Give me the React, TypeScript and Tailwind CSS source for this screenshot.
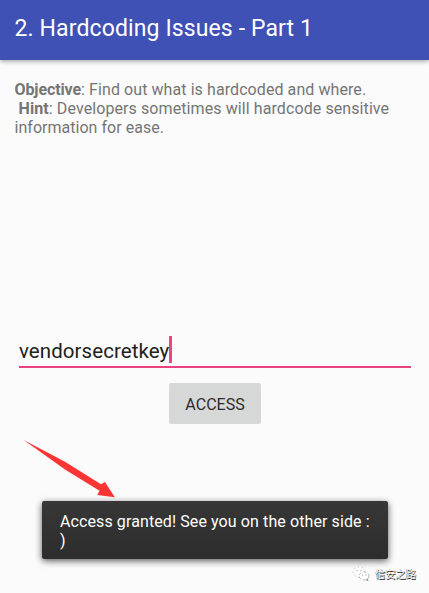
import React from "react";

function AppBar() {
  return (
    <header className="relative z-10 h-[60px] bg-[#3f51b5] pl-[14.5px] pt-[14px] shadow-[0_1px_5px_rgba(0,0,0,0.4)]">
      <h1 className="whitespace-nowrap text-[23px] leading-[30px] tracking-[0.12px] text-white">
        2. Hardcoding Issues - Part 1
      </h1>
    </header>
  );
}

function Instructions() {
  return (
    <div className="h-[275px] pl-[14.5px] pt-[21px] text-[16px] leading-[18.75px] text-[#757575]">
      <p className="whitespace-pre tracking-[0.08px]">
        <b className="tracking-[-0.1px]">Objective</b>: Find out what is hardcoded and where.
      </p>
      <p className="whitespace-pre tracking-[0.09px]">
        {" "}
        <b>Hint</b>: Developers sometimes will hardcode sensitive
      </p>
      <p className="whitespace-pre tracking-[0.03px]">information for ease.</p>
    </div>
  );
}

function KeyField() {
  return (
    <div className="mx-[19px] mr-[18px] flex h-[33px] items-start border-b-2 border-[#e9427e]">
      <span className="pt-px text-[20.5px] leading-[31px] tracking-[0.07px] text-[#212121]">vendorsecretkey</span>
      <span className="mt-px h-[27px] w-[2.5px] bg-[#f0437f]" />
    </div>
  );
}

function Toast() {
  return (
    <div className="ml-[42px] mt-[77px] h-[58px] w-[346px] rounded-[2px] bg-linear-to-b from-[#373737] to-[#2d2d2d] pl-[18px] pt-[11px] text-[16px] leading-[19px] text-white shadow-[0_2px_7px_rgba(0,0,0,0.65)]">
      <p className="whitespace-nowrap tracking-[0.1px]">Access granted! See you on the other side :</p>
      <p>)</p>
    </div>
  );
}

function Watermark() {
  return (
    <div className="ml-[351px] mt-[5px] flex h-[20px] items-center">
      <svg width="20" height="18" viewBox="0 0 20 18" fill="none">
        <ellipse cx="8" cy="7" rx="6" ry="5" fill="#fff" stroke="#aaa" strokeWidth=".7" strokeDasharray="1.5 2.5" />
        <ellipse cx="13" cy="11" rx="5" ry="4" fill="#fff" stroke="#999" strokeWidth=".7" strokeDasharray="3 2" />
        <path d="M5.5 5.5h1M9.5 5.5h1M11 10h1M14.5 10h1M15 14.5l2 1.2-.5-2" stroke="#777" strokeWidth=".8" />
      </svg>
      <span className="ml-1 whitespace-nowrap font-['Noto_Sans_CJK_SC',sans-serif] text-[10.3px] leading-[16px] text-white [text-shadow:0.7px_0.7px_0_#222,-0.3px_-0.2px_0_#777]">
        信安之路
      </span>
    </div>
  );
}

export default function App() {
  return (
    <main className="relative h-[593px] w-[429px] overflow-hidden bg-[#fbfbfb] font-[Roboto,sans-serif]">
      <AppBar />
      <Instructions />
      <KeyField />
      <button className="ml-[169px] mt-[15px] block h-[41px] w-[92px] rounded-[2px] bg-[#d6d8d7] pt-[2px] text-[16px] leading-[20px] text-[#2b2b2b]">
        ACCESS
      </button>
      <Toast />
      <Watermark />
      <svg className="absolute left-[20px] top-[436px]" width="100" height="66" viewBox="20 436 100 66">
        <path d="M23.7 440 65 461.8 101 484.3 105 482 114.8 497.2 97.3 495 99.5 490.8 65 469.5Z" fill="#fb3434" />
      </svg>
    </main>
  );
}
